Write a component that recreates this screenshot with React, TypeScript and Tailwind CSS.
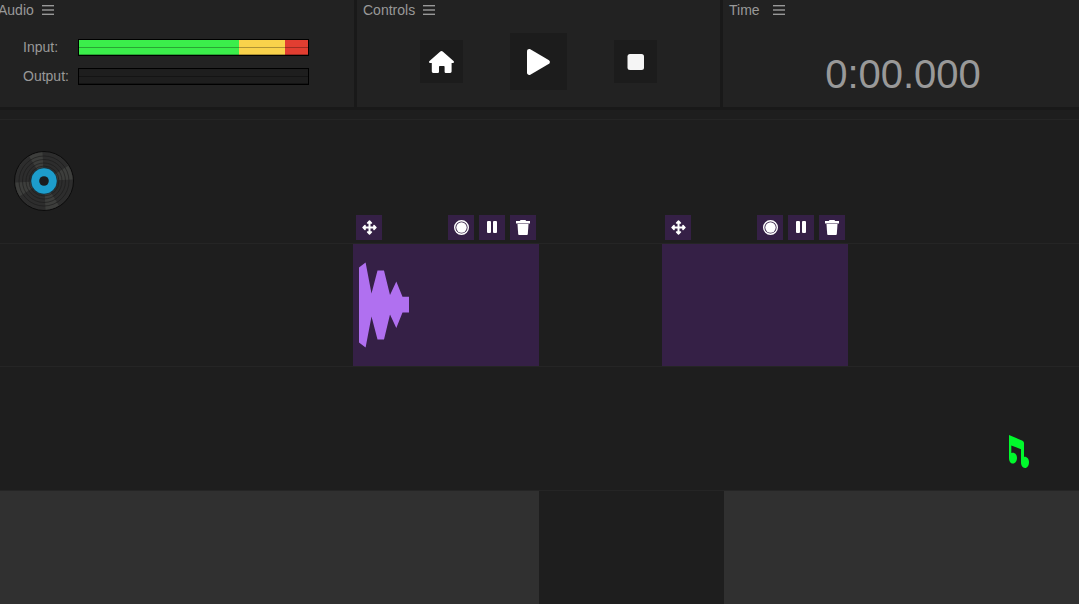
import { ReactNode } from "react";

interface PanelProps {
  title: string;
  className?: string;
  children: ReactNode;
}

interface MeterProps {
  label: string;
  value: number;
}

interface ControlButtonProps {
  label: string;
  large?: boolean;
  children: ReactNode;
}

interface ClipProps {
  name: string;
  className?: string;
  children?: ReactNode;
}

function MenuIcon() {
  return (
    <svg width="12" height="10" viewBox="0 0 12 10" fill="currentColor">
      <rect y="0" width="12" height="1.4" />
      <rect y="4.300" width="12" height="1.4" />
      <rect y="8.600" width="12" height="1.4" />
    </svg>
  );
}

function HomeIcon() {
  return (
    <svg width="25" height="22" viewBox="0 0 25 22" fill="currentColor">
      <path d="M11.300 .500Q12.500 -.500 13.700 .500L24.500 10Q25.300 10.800 24.800 11.500Q24.400 12 23.500 12H22.600V20.600Q22.600 22 21.200 22H16.800Q15.600 22 15.600 20.800V15.800Q15.600 15 14.800 15H10.800Q10 15 10 15.800V20.800Q10 22 8.800 22H4.200Q2.800 22 2.800 20.600V12H1.500Q.600 12 .200 11.500Q-.300 10.800 .500 10Z" />
    </svg>
  );
}

function PlayIcon() {
  return (
    <svg width="23" height="26" viewBox="0 0 23 26" fill="currentColor">
      <path d="M0 2.200C0 .500 1.800 -.500 3.300 .300L21.600 10.900C23.300 11.900 23.300 14.100 21.600 15.100L3.300 25.700C1.800 26.500 0 25.500 0 23.800Z" />
    </svg>
  );
}

function StopIcon() {
  return (
    <svg width="17" height="16" viewBox="0 0 17 16" fill="#f5f5f5">
      <rect x="0.5" width="16.500" height="16" rx="2.500" />
    </svg>
  );
}

function MoveIcon() {
  return (
    <svg width="15" height="15" viewBox="0 0 15 15" fill="none" stroke="currentColor">
      <path d="M7.500 2V13M2 7.500H13" strokeWidth="2" />
      <path
        d="M5.600 3L7.500 1.100L9.400 3ZM5.600 12L7.500 13.900L9.400 12ZM3 5.600L1.100 7.500L3 9.400ZM12 5.600L13.900 7.500L12 9.400Z"
        fill="currentColor"
        strokeWidth="1.600"
        strokeLinejoin="round"
      />
    </svg>
  );
}

function RecordIcon() {
  return (
    <svg width="15" height="15" viewBox="0 0 15 15">
      <circle cx="7.5" cy="7.5" r="6.8" fill="none" stroke="currentColor" strokeWidth="1.4" />
      <circle cx="7.5" cy="7.5" r="5.2" fill="currentColor" />
    </svg>
  );
}

function PauseIcon() {
  return (
    <svg width="10" height="12" viewBox="0 0 10 12" fill="currentColor">
      <rect width="4" height="12" rx="1" />
      <rect x="6" width="4" height="12" rx="1" />
    </svg>
  );
}

function TrashIcon() {
  return (
    <svg width="14" height="15" viewBox="0 0 14 15" fill="currentColor">
      <path d="M0 1H3.800L4.600 0H9.400L10.200 1H14V3.400H0Z" />
      <path d="M1.500 4H12.500L11.800 14.200Q11.700 15 10.900 15H3.100Q2.300 15 2.200 14.200Z" />
    </svg>
  );
}

function VinylIcon() {
  return (
    <svg width="60" height="60" viewBox="0 0 60 60">
      <circle cx="30" cy="30" r="29.500" fill="#2d2d2d" stroke="#0c0c0c" />
      <g fill="#3d3e3c">
        <path d="M30 30L15.200 5.400A28.700 28.700 0 0 1 28.500 1.300Z" />
        <path d="M30 30L54.300 14.700A28.700 28.700 0 0 1 58.700 28.500Z" />
        <path d="M30 30L44.800 54.600A28.700 28.700 0 0 1 31.500 58.700Z" />
        <path d="M30 30L5.700 45.300A28.700 28.700 0 0 1 1.300 31.500Z" />
      </g>
      <g fill="none" stroke="#1a1a1a" strokeWidth="0.6">
        <circle cx="30" cy="30" r="25" />
        <circle cx="30" cy="30" r="21.500" />
        <circle cx="30" cy="30" r="18" />
        <circle cx="30" cy="30" r="15" />
      </g>
      <circle cx="30" cy="30" r="13.200" fill="#1d9dcc" stroke="#101010" strokeWidth="0.6" />
      <circle cx="30" cy="30" r="4.800" fill="#1a1c1e" />
    </svg>
  );
}

function NotesIcon() {
  return (
    <svg width="20" height="33" viewBox="0 0 20 33" fill="#00f92c">
      <path d="M0 0L13.500 5.700Q15 6.500 15 8V21.900C18 21.500 20 24 20 27C20 30.500 18.400 33 16 33C13.600 33 12 30.500 12 27.300V14.300L2.300 10.400V18C5.600 17 8 19.500 8 22.800C8 26 6.400 28.600 4 28.600C1.600 28.600 0 26.200 0 23Z" />
    </svg>
  );
}

function Panel({ title, className = "", children }: Readonly<PanelProps>) {
  return (
    <section className={"flex flex-col bg-[#222222] " + className}>
      <header className="flex h-5 items-center gap-2 px-1.5">
        <h2 className="min-w-9 text-[14px] leading-5">{title}</h2>
        <button type="button" aria-label={`${title} menu`}>
          <MenuIcon />
        </button>
      </header>
      {children}
    </section>
  );
}

function Meter({ label, value }: Readonly<MeterProps>) {
  return (
    <div className="flex items-center">
      <span id={label} className="w-[55px] text-[14px] leading-5">
        {label}:
      </span>
      <div
        role="meter"
        aria-labelledby={label}
        aria-valuenow={value}
        aria-valuemin={0}
        aria-valuemax={100}
        className="flex h-[17px] w-[231px] flex-col border border-black bg-[#1e1e1e]"
      >
        <div
          className="h-full shrink-0 bg-[linear-gradient(to_right,#3bee4b_70%,#f9d24b_70%,#f9d24b_90%,#e23e31_90%)]"
          style={{ width: `${value}%` }}
        />
        {/* channel separators */}
        <div className="-mt-[15px] h-2 shrink-0 border-b border-black/30" />
        <div className="h-[7px] shrink-0 border-b border-black/30" />
      </div>
    </div>
  );
}

function ControlButton({ label, large, children }: Readonly<ControlButtonProps>) {
  return (
    <button
      type="button"
      aria-label={label}
      className={`flex items-center justify-center bg-[#1c1c1c] text-white ${
        large ? "size-[57px]" : "size-[43px]"
      }`}
    >
      {children}
    </button>
  );
}

function ClipButton({ label, children }: Readonly<ControlButtonProps>) {
  return (
    <button
      type="button"
      aria-label={label}
      className="flex h-[25px] w-[26px] items-center justify-center bg-[#352046] text-white"
    >
      {children}
    </button>
  );
}

function Clip({ name, className = "", children }: Readonly<ClipProps>) {
  return (
    <div className={"relative w-[186px] shrink-0 bg-[#352046] " + className}>
      {/* toolbar hangs above the clip, over the previous track */}
      <div className="absolute inset-x-[3px] bottom-full mb-1 flex gap-[5px]">
        <ClipButton label={`Move ${name}`}>
          <MoveIcon />
        </ClipButton>
        <div className="flex-1" />
        <ClipButton label={`Record ${name}`}>
          <RecordIcon />
        </ClipButton>
        <ClipButton label={`Pause ${name}`}>
          <PauseIcon />
        </ClipButton>
        <ClipButton label={`Delete ${name}`}>
          <TrashIcon />
        </ClipButton>
      </div>
      {children}
    </div>
  );
}

function Waveform() {
  return (
    <svg width="50" height="86" viewBox="0 0 50 86" fill="#b070f0">
      <path d="M0 5.500L6.600 0.500L12.500 31.500L18.500 8.500H25L31 33L37.300 19.500L43.500 34.800H50V50.500H43.500L37.300 66L31 52.500L25 77.500H18.500L12.500 54.500L6.600 85.500L0 80.500Z" />
    </svg>
  );
}

export default function App() {
  return (
    <div className="flex min-h-screen flex-col overflow-hidden bg-[#1e1e1e] font-['Liberation_Sans',Arial,sans-serif] text-[#999999]">
      <div className="grid grid-cols-[354fr_363fr_356fr] gap-[3px] border-b-[3px] border-[#191919] bg-[#191919]">
        <Panel title="Audio" className="-ml-2">
          <div className="flex flex-1 flex-col gap-[9px] pt-[17px] pl-[31px]">
            <Meter label="Input" value={100} />
            <Meter label="Output" value={0} />
          </div>
        </Panel>
        <Panel title="Controls">
          <div className="flex h-[87px] items-center justify-center gap-[47px] pb-1">
            <ControlButton label="Home">
              <HomeIcon />
            </ControlButton>
            <ControlButton label="Play" large>
              <PlayIcon />
            </ControlButton>
            <ControlButton label="Stop">
              <StopIcon />
            </ControlButton>
          </div>
        </Panel>
        <Panel title="Time">
          <div className="flex flex-1 items-center justify-center pt-5 pl-1 text-[40px] leading-none">
            <time>0:00.000</time>
          </div>
        </Panel>
      </div>

      <main className="flex flex-1 flex-col pt-[9px]">
        <div className="grid h-[371px] grid-rows-3">
          <div className="flex items-center border-t border-[#252525] pl-3.5">
            <VinylIcon />
          </div>
          <div className="flex border-t border-[#252525] pl-[353px]">
            <Clip name="clip 1" className="flex items-center pl-1.5">
              <Waveform />
            </Clip>
            <Clip name="clip 2" className="ml-[123px]" />
          </div>
          <div className="flex items-end justify-end border-t border-[#252525] pr-[50px] pb-[22px]">
            <NotesIcon />
          </div>
        </div>
        <div className="flex flex-1 border-t border-[#252525]">
          <div className="w-[539px] bg-[#303030]" />
          <div className="w-[185px]" />
          <div className="flex-1 bg-[#303030]" />
        </div>
      </main>
    </div>
  );
}
